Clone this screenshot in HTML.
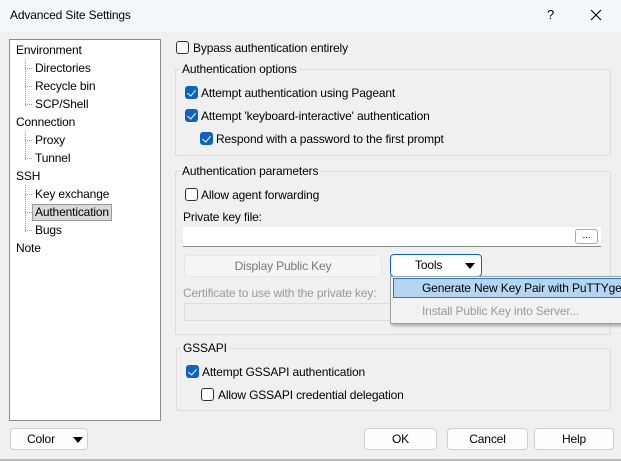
<!DOCTYPE html>
<html><head><style>
*{box-sizing:border-box;margin:0;padding:0}
body{width:621px;height:461px;overflow:hidden;background:#f0f0f0;font-family:"Liberation Sans",sans-serif;font-size:12px;letter-spacing:-0.15px;color:#000;position:relative}
.a{position:absolute;white-space:nowrap}
.title{left:0;top:0;width:621px;height:32px;background:#f3f6fb}
.tree{left:9px;top:39px;width:152px;height:382px;background:#fff;border:1px solid #8c8c8c}
.ti{position:absolute;line-height:18px}
.dot{position:absolute;border-left:1px dotted #999}
.hd{position:absolute;border-top:1px dotted #999;width:7px}
.grp{border:1px solid #dcdcdc;border-radius:2px}
.gl{background:#f0f0f0;padding:0 2px}
.cb{position:absolute;width:13px;height:13px;border:1px solid #333;border-radius:3px;background:#fff}
.cb.on{background:#0f62be;border-color:#0f62be}
.cb.on:after{content:"";position:absolute;left:3px;top:1px;width:4px;height:7px;border:solid #fff;border-width:0 1.3px 1.3px 0;transform:rotate(40deg)}
.btn{background:#fdfdfd;border:1px solid #d0d0d0;border-radius:4px;text-align:center;line-height:20px}
.tri{display:inline-block;width:0;height:0;border-left:5px solid transparent;border-right:5px solid transparent;border-top:6px solid #000}
</style></head><body>
<div class="a title"></div>
<div class="a" style="left:10px;top:8px;font-size:12px">Advanced Site Settings</div>
<div class="a" style="left:547px;top:7px;font-size:13px">?</div>
<svg class="a" style="left:590px;top:9px" width="12" height="12"><path d="M1 1L11 11M11 1L1 11" stroke="#000" stroke-width="1.1"/></svg>

<div class="a tree">
<div class="ti" style="left:6px;top:1px">Environment</div>
<div class="ti" style="left:25px;top:19px">Directories</div>
<div class="ti" style="left:25px;top:37px">Recycle bin</div>
<div class="ti" style="left:25px;top:55px">SCP/Shell</div>
<div class="ti" style="left:6px;top:73px">Connection</div>
<div class="ti" style="left:25px;top:91px">Proxy</div>
<div class="ti" style="left:25px;top:109px">Tunnel</div>
<div class="ti" style="left:6px;top:127px">SSH</div>
<div class="ti" style="left:25px;top:145px">Key exchange</div>
<div class="ti" style="left:22px;top:164px;background:#d9d9d9;border:1px solid #999;padding:0 2px;line-height:15px">Authentication</div>
<div class="ti" style="left:25px;top:181px">Bugs</div>
<div class="ti" style="left:6px;top:199px">Note</div>
<div class="dot" style="left:15px;top:19px;height:47px"></div>
<div class="hd" style="left:15px;top:28px"></div><div class="hd" style="left:15px;top:46px"></div><div class="hd" style="left:15px;top:64px"></div>
<div class="dot" style="left:15px;top:91px;height:29px"></div>
<div class="hd" style="left:15px;top:100px"></div><div class="hd" style="left:15px;top:118px"></div>
<div class="dot" style="left:15px;top:145px;height:47px"></div>
<div class="hd" style="left:15px;top:154px"></div><div class="hd" style="left:15px;top:172px"></div><div class="hd" style="left:15px;top:190px"></div>
</div>

<div class="cb" style="left:176px;top:41px"></div>
<div class="a" style="left:193px;top:41px">Bypass authentication entirely</div>

<div class="a grp" style="left:175px;top:69px;width:436px;height:87px"></div>
<div class="a gl" style="left:180px;top:62px">Authentication options</div>
<div class="cb on" style="left:185px;top:86px"></div><div class="a" style="left:201px;top:86px">Attempt authentication using Pageant</div>
<div class="cb on" style="left:185px;top:109px"></div><div class="a" style="left:201px;top:109px">Attempt 'keyboard-interactive' authentication</div>
<div class="cb on" style="left:200px;top:132px"></div><div class="a" style="left:216px;top:132px">Respond with a password to the first prompt</div>

<div class="a grp" style="left:175px;top:171px;width:436px;height:164px"></div>
<div class="a gl" style="left:180px;top:164px">Authentication parameters</div>
<div class="cb" style="left:185px;top:188px"></div><div class="a" style="left:201px;top:188px">Allow agent forwarding</div>
<div class="a" style="left:183px;top:210px">Private key file:</div>
<div class="a" style="left:183px;top:227px;width:418px;height:20px;background:#fff;border-bottom:1px solid #888"></div>
<div class="a" style="left:575px;top:229px;width:23px;height:15px;border:1px solid #aaa;border-radius:3px;background:#fff;font-size:10px;text-align:center;line-height:11px">...</div>
<div class="a btn" style="left:184px;top:255px;width:198px;height:22px;color:#777;background:#f5f5f5;border-color:#e6e6e6">Display Public Key</div>
<div class="a" style="left:183px;top:286px;color:#999">Certificate to use with the private key:</div>
<div class="a" style="left:184px;top:303px;width:210px;height:18px;border:1px solid #ddd;background:#efefef"></div>
<div class="a btn" style="left:390px;top:254px;width:92px;height:23px;border:1px solid #0f62be;background:#fff;text-align:left;padding-left:24px;line-height:21px">Tools<span class="tri" style="position:absolute;left:74px;top:8px"></span></div>
<div class="a" style="left:390px;top:276px;width:235px;height:48px;background:#f2f2f2;border:1px solid #a0a0a0;box-shadow:2px 2px 3px rgba(0,0,0,.3)"></div>
<div class="a" style="left:393px;top:278px;width:230px;height:20px;background:#b6d5f2;border:1px solid #2a78c8"></div>
<div class="a" style="left:422px;top:281px">Generate New Key Pair with PuTTYgen</div>
<div class="a" style="left:422px;top:304px;color:#999">Install Public Key into Server...</div>

<div class="a grp" style="left:176px;top:348px;width:435px;height:63px"></div>
<div class="a gl" style="left:181px;top:341px">GSSAPI</div>
<div class="cb on" style="left:186px;top:365px"></div><div class="a" style="left:202px;top:365px">Attempt GSSAPI authentication</div>
<div class="cb" style="left:201px;top:388px"></div><div class="a" style="left:218px;top:388px">Allow GSSAPI credential delegation</div>

<div class="a btn" style="left:10px;top:428px;width:78px;height:22px;text-align:left;padding-left:16px">Color<span class="tri" style="position:absolute;left:62px;top:8px"></span></div>
<div class="a btn" style="left:364px;top:428px;width:73px;height:22px">OK</div>
<div class="a btn" style="left:447px;top:428px;width:81px;height:22px">Cancel</div>
<div class="a btn" style="left:534px;top:428px;width:80px;height:22px">Help</div>
<div class="a" style="left:0;top:459px;width:621px;height:2px;background:#bbb"></div>
</body></html>
